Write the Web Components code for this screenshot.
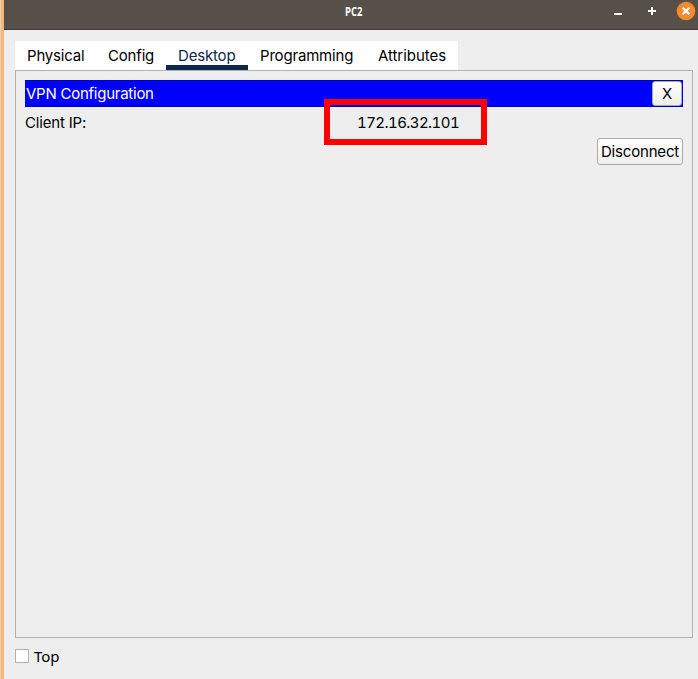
<!DOCTYPE html>
<html lang="en"><head><meta charset="utf-8"><title>PC2</title>
<style>
html,body{margin:0;height:679px;overflow:hidden;background:#eee}
body{font:15px/20px Inter,"Liberation Sans",sans-serif;letter-spacing:-.18px;color:#000}
</style></head><body>
<pc-window></pc-window>
<script>
const define=(name,html)=>{
  const t=document.createElement('template');t.innerHTML=html;
  customElements.define(name,class extends HTMLElement{
    constructor(){super();this.attachShadow({mode:'open'}).append(t.content.cloneNode(true));}
  });
};
define('title-bar',`<style>
:host{display:grid;grid-template-columns:1fr auto;height:30px;box-sizing:border-box;background:#574f49;border-bottom:1px solid #3e3935;color:#fff}
.t{font:bold 12px/23px "Open Sans",sans-serif;letter-spacing:0;padding-left:341px}
.t span{display:inline-block;transform:scaleX(.79);transform-origin:0 50%}
svg{display:block}
</style><div class="t"><span><slot></slot></span></div>
<svg width="98" height="29" viewBox="0 0 98 29"><path d="M14 13h8v2h-8zM48 10h8v2h-8zM51 7h2v8h-2z" fill="#fff"/><circle cx="86" cy="11" r="9.3" fill="#f28b2c"/><path d="M82.7 7.7l6.6 6.6m0-6.6l-6.6 6.6" stroke="#fff" stroke-width="2.3"/></svg>`);
define('tab-item',`<style>
:host{display:block;box-sizing:border-box;height:29px;padding:5px 0 0 12px;white-space:nowrap}
:host([active]){color:#0d274d;border-bottom:5px solid #0d274d}
</style><slot></slot>`);
define('tab-strip',`<style>
:host{display:grid;grid-template-columns:81px 70px 82px 118px 92px;width:443px;height:29px;background:#fff}
</style><slot></slot>`);
define('push-button',`<style>
:host{display:flex;align-items:center;justify-content:center;box-sizing:border-box;border:1px solid #ababab;border-radius:3px;background:linear-gradient(#fff,#eee);color:#000;white-space:nowrap}
</style><slot></slot>`);
define('panel-header',`<style>
:host{display:flex;justify-content:space-between;align-items:center;box-sizing:border-box;height:27px;padding:0 1px;background:#00f;color:#fff;letter-spacing:-.25px;box-shadow:inset 0 1px #0000b8,inset 0 -1px #0000b8}
push-button{width:30px;height:25px}
</style><slot></slot><push-button>X</push-button>`);
define('ip-row',`<style>
:host{display:grid;grid-template-columns:332px 1fr;padding-top:6px;height:25px}
.v{position:relative;justify-self:start}
.v::after{content:"";position:absolute;left:-33px;top:-14px;width:151px;height:34px;border:6px solid #f00}
</style><span><slot name="label"></slot></span><span class="v"><slot></slot></span>`);
define('vpn-panel',`<style>
:host{display:block;box-sizing:border-box;width:678px;height:568px;border:1px solid #b2b2b2;padding:9px 9px 0}
push-button{width:86px;height:27px;margin-left:auto}
#value{font-variant-numeric:tabular-nums;letter-spacing:-.56px}
</style><panel-header><span>VPN Configuration</span></panel-header>
<ip-row><span slot="label">Client IP:</span><span id="value">172.16.32.101</span></ip-row>
<push-button>Disconnect</push-button>`);
define('check-box',`<style>
:host{display:flex;align-items:center;gap:5px;font-family:"Noto Sans",sans-serif;letter-spacing:0}
i{box-sizing:border-box;width:14px;height:14px;border:1px solid #b2b2b2;background:#fff}
</style><i></i><span><slot></slot></span>`);
define('pc-window',`<style>
:host{display:block;box-sizing:border-box;width:698px;height:679px;border-left:4px solid;border-image:linear-gradient(90deg,#d4d4d4 0 1px,#ffb66c 1px) 0 0 0 4;background:#eee}
main{padding:11px 0 0 11px}
check-box{margin-top:8px}
tab-item:last-child{letter-spacing:-.05px}
</style><title-bar>PC2</title-bar><main>
<tab-strip><tab-item>Physical</tab-item><tab-item>Config</tab-item><tab-item active>Desktop</tab-item><tab-item>Programming</tab-item><tab-item>Attributes</tab-item></tab-strip>
<vpn-panel></vpn-panel><check-box>Top</check-box></main>`);
</script></body></html>
